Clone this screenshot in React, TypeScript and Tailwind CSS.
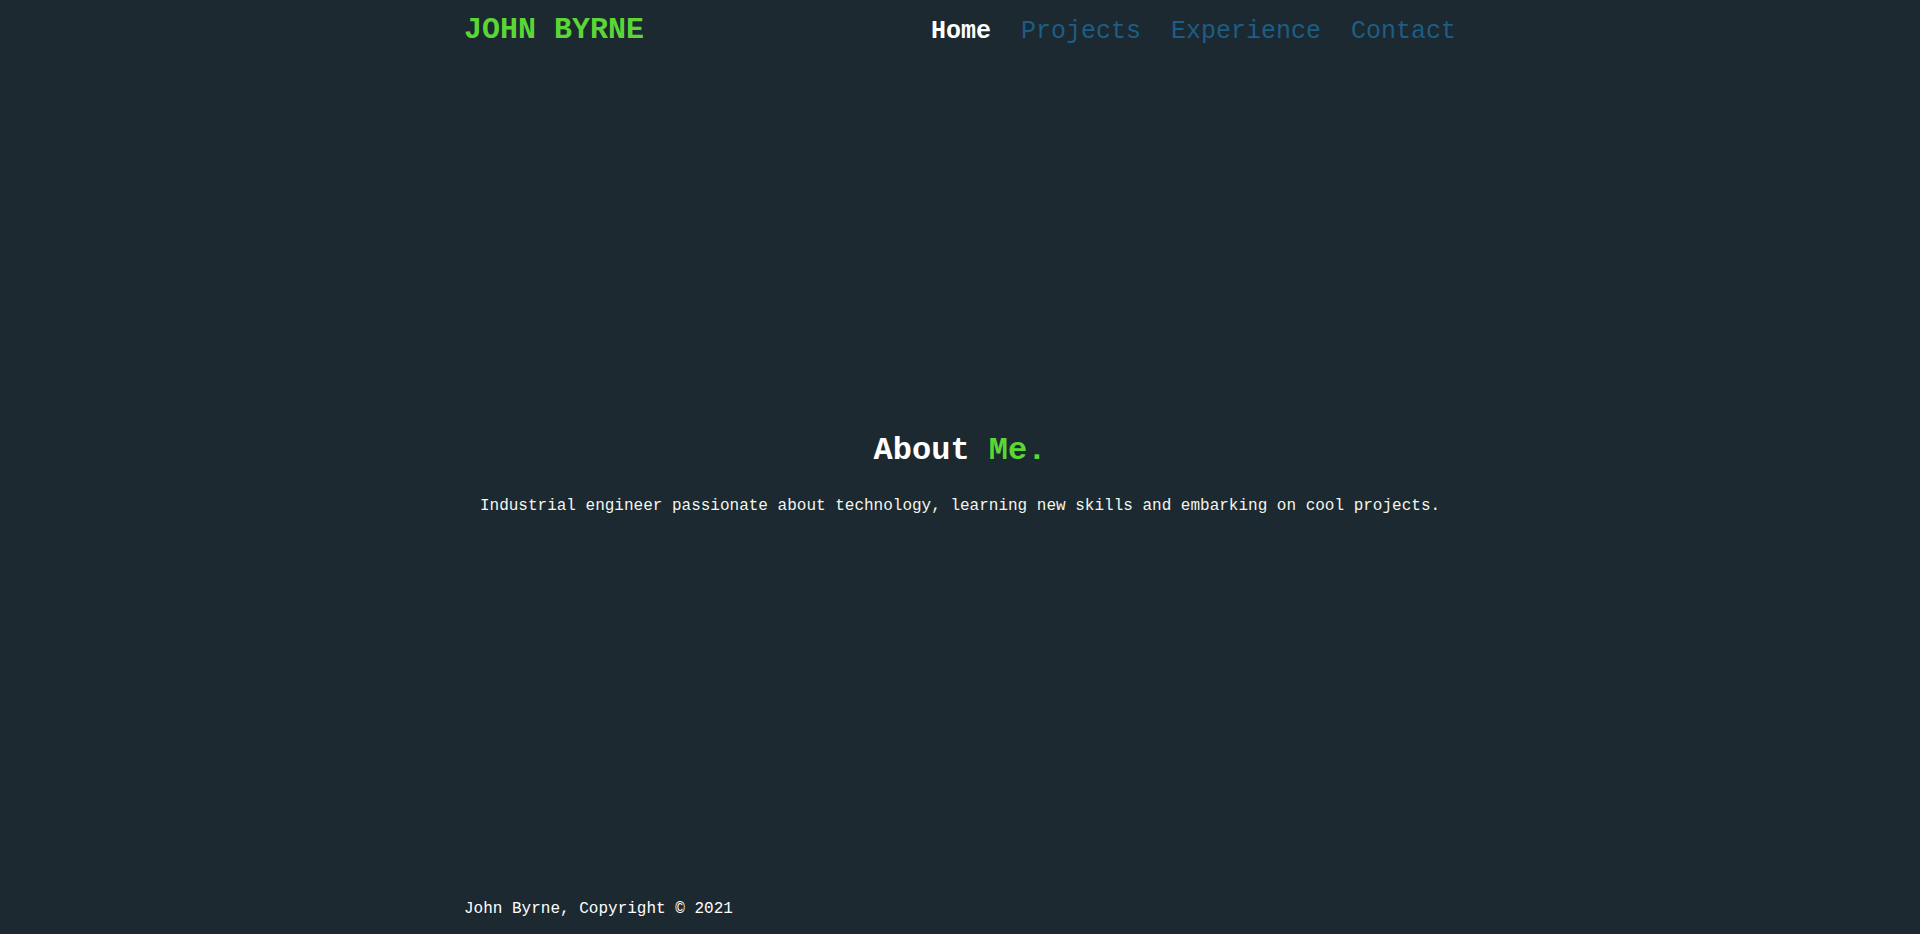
import React from 'react';

const links = ['Home', 'Projects', 'Experience', 'Contact'];

const App: React.FC = () => {
  return (
    <div className="flex h-[934px] flex-col bg-[#1c2930] font-['Liberation_Mono','Courier_New',monospace] text-white">
      {/* Header */}
      <header className="mx-auto flex w-full max-w-[1024px] items-baseline justify-between px-4 pt-[15px]">
        <a href="#" className="text-[30px] font-bold leading-[30px] text-[#5bd637]">
          JOHN BYRNE
        </a>
        <nav className="flex items-baseline gap-[30px]">
          {links.map((l, i) => (
            <a
              key={l}
              href="#"
              className={`text-[25px] leading-[24px] ${i === 0 ? 'font-bold text-white' : 'text-[#1d5d86]'}`}
            >
              {l}
            </a>
          ))}
        </nav>
      </header>

      {/* About */}
      <main className="mx-auto flex w-full max-w-[1024px] flex-1 flex-col items-center justify-center px-4 pt-[2px]">
        <h2 className="text-[32px] font-bold leading-[32px]">
          About <span className="text-[#5bd637]">Me.</span>
        </h2>
        <p className="mt-[31px] text-[16px] leading-[16px] text-[#f4f6ee]">
          Industrial engineer passionate about technology, learning new skills and embarking on cool projects.
        </p>
      </main>

      {/* Footer */}
      <footer className="mx-auto w-full max-w-[1024px] px-4 pb-[17px]">
        <p className="text-[16px] leading-[16px]">John Byrne, Copyright © 2021</p>
      </footer>
    </div>
  );
};

export default App;
